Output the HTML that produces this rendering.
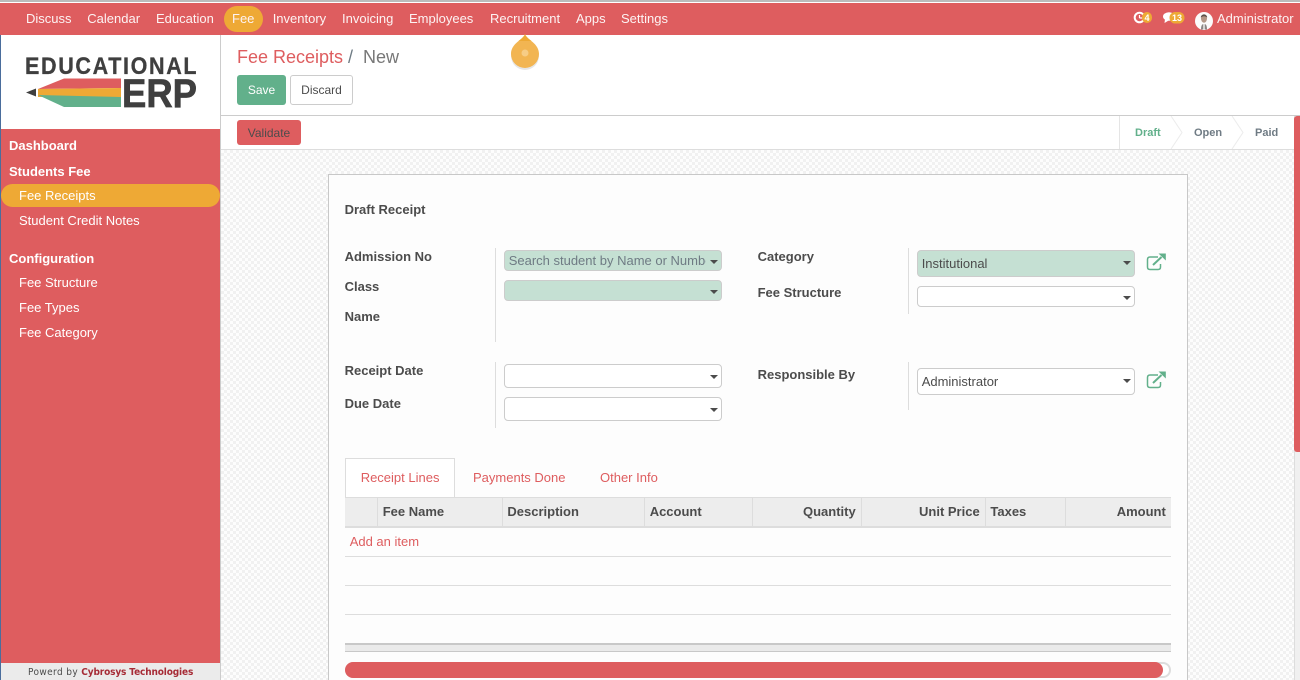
<!DOCTYPE html>
<html><head><meta charset="utf-8"><style>
html,body{margin:0;padding:0;width:1300px;height:680px;overflow:hidden;background:#fff;font-family:"Liberation Sans",sans-serif;font-size:13px;color:#4c4c4c}
div,span,a{position:absolute;white-space:nowrap;box-sizing:border-box}
.n{top:11px;color:#fdf3f3;line-height:15px}
.s{color:#fff;line-height:15px}
.b{font-weight:700;color:#fff}
.l{font-weight:700;color:#4c4c4c;line-height:15px}
.sel{border:1px solid #ccc;border-radius:4px;background:#fff;height:24px;width:218px;line-height:24px;padding-left:4px;color:#4c4c4c}
.g{background:#c5e0d3}
.sel i{position:absolute;right:3px;top:10px;border-left:4px solid transparent;border-right:4px solid transparent;border-top:4px solid #4c4c4c}
.v{width:1px;background:#ddd}
.th{top:498px;height:29px;line-height:28px;font-weight:700;color:#4c4c4c}
.sep{top:498px;height:29px;width:1px;background:#ddd}
.h{left:345px;width:826px;height:1px;background:#ddd}
</style></head><body>
<div style="left:0;top:0;width:1300px;height:3px;background:#fff;border-top:2px solid #bbb"></div>
<div style="left:0;top:3px;width:1300px;height:32px;background:#de5d5f"></div>
<div style="left:224px;top:6px;width:39px;height:26px;border-radius:13px;background:#eea935"></div>
<span class="n" style="left:26px">Discuss</span>
<span class="n" style="left:87.300px">Calendar</span>
<span class="n" style="left:156px">Education</span>
<span class="n" style="left:232px">Fee</span>
<span class="n" style="left:272.700px">Inventory</span>
<span class="n" style="left:342px">Invoicing</span>
<span class="n" style="left:409px">Employees</span>
<span class="n" style="left:490px">Recruitment</span>
<span class="n" style="left:576px">Apps</span>
<span class="n" style="left:621px">Settings</span>

<svg style="position:absolute;left:505px;top:33px" width="40" height="40" viewBox="0 0 40 40"><path d="M20 1C18 7 6 10 6 21a14 14 0 0 0 28 0C34 10 22 7 20 1Z" fill="#e6e6e6" transform="translate(0 2)"/><path d="M20 1C18 7 6 10 6 21a14 14 0 0 0 28 0C34 10 22 7 20 1Z" fill="#f2b552"/><path d="M20 1C19 4 16 6 13.500 8H26.500C24 6 21 4 20 1Z" fill="#eea935"/><circle cx="20" cy="20" r="3.500" fill="#f7cd86"/></svg>

<svg style="position:absolute;left:1132px;top:10px" width="24" height="16" viewBox="0 0 24 16"><circle cx="7.500" cy="7.500" r="4.800" fill="none" stroke="#fff" stroke-width="2"/><path d="M7.500 8h4M7.500 8V5" stroke="#fff" stroke-width="1.200"/><rect x="10" y="2" width="10" height="11" rx="5" fill="#eea935"/><text x="15" y="11" font-size="9" font-weight="700" fill="#fff" text-anchor="middle" font-family="Liberation Sans">4</text></svg>
<svg style="position:absolute;left:1162px;top:10px" width="24" height="16" viewBox="0 0 24 16"><ellipse cx="7" cy="6.500" rx="6" ry="4.300" fill="#fff"/><path d="M3 9l-.5 4 5-3Z" fill="#fff"/><rect x="7.500" y="2" width="15" height="11.500" rx="5.700" fill="#eea935"/><text x="15" y="11" font-size="9" font-weight="700" fill="#fff" text-anchor="middle" font-family="Liberation Sans">13</text></svg>
<svg style="position:absolute;left:1195px;top:11.500px" width="18" height="18" viewBox="0 0 18 18"><circle cx="9" cy="9" r="9" fill="#fbfbfb"/><ellipse cx="9" cy="6.500" rx="3" ry="4.200" fill="#b39786"/><path d="M5.800 5.500C6 1.500 12 1.500 12.200 5.500 10 3.800 8 3.800 5.800 5.500Z" fill="#5a504a"/><path d="M6 17.500c0-4 1-5.500 3-5.500s3 1.500 3 5.500Z" fill="#8a8684"/><path d="M8.300 12h1.400v5.500H8.300Z" fill="#f2f2f2"/></svg>
<span class="n" style="left:1217px">Administrator</span>

<!-- sidebar -->
<div style="left:220px;top:35px;width:1px;height:645px;background:#ccc"></div>
<div style="left:0;top:35px;width:1px;height:645px;background:#4a6d9c"></div>
<svg style="position:absolute;left:20px;top:50px" width="185" height="62" viewBox="20 50 185 62">
<g transform="translate(25 74) scale(.88 1)"><text x="0" y="0" font-family="Liberation Sans" font-weight="700" font-size="24.500" fill="#3f3f3f" stroke="#3f3f3f" stroke-width=".3" textLength="195" lengthAdjust="spacing">EDUCATIONAL</text></g>
<path d="M26 92.500 36 88.500V96.500Z" fill="#3f3f3f"/>
<path d="M38 89 64 78.500H121V88Z" fill="#de5d5f"/>
<path d="M38 89 121 88V97H38Z" fill="#eea935"/>
<path d="M38 95 121 97V107H64Z" fill="#62b08b"/>
<text x="122" y="107" font-family="Liberation Sans" font-weight="700" font-size="40" fill="#3f3f3f" stroke="#3f3f3f" stroke-width=".7" textLength="75" lengthAdjust="spacingAndGlyphs">ERP</text>
</svg>
<div style="left:1px;top:129px;width:219px;height:534px;background:#de5d5f"></div>
<div style="left:1px;top:663px;width:219px;height:17px;background:#ebebeb"></div>
<span style="left:28px;top:666px;font-size:10px;line-height:13px;letter-spacing:.42px;font-family:'DejaVu Sans','Liberation Sans',sans-serif;transform-origin:0 0;transform:scaleX(.9)">Powerd by <b style="color:#a62b36;letter-spacing:-.16px">Cybrosys Technologies</b></span>
<span class="s b" style="left:9px;top:138px">Dashboard</span>
<span class="s b" style="left:9px;top:164px">Students Fee</span>
<div style="left:1px;top:184px;width:219px;height:23px;border-radius:12px;background:#eea935"></div>
<span class="s" style="left:19px;top:188px">Fee Receipts</span>
<span class="s" style="left:19px;top:213px">Student Credit Notes</span>
<span class="s b" style="left:9px;top:251px">Configuration</span>
<span class="s" style="left:19px;top:275px">Fee Structure</span>
<span class="s" style="left:19px;top:300px">Fee Types</span>
<span class="s" style="left:19px;top:325px">Fee Category</span>

<!-- header -->
<span style="left:237px;top:46px;font-size:18px;line-height:22px;color:#de5d5f">Fee Receipts</span>
<span style="left:348px;top:46px;font-size:18px;line-height:22px;color:#6f7b84">/</span>
<span style="left:363px;top:46px;font-size:18px;line-height:22px;color:#777">New</span>
<div style="left:237px;top:75px;width:49px;height:30px;border-radius:3px;background:#62b08b;color:#fff;font-size:12px;line-height:30px;text-align:center">Save</div>
<div style="left:290px;top:75px;width:63px;height:30px;border-radius:3px;border:1px solid #ccc;background:#fff;font-size:12px;line-height:28px;text-align:center;color:#4c4c4c">Discard</div>
<div style="left:221px;top:115px;width:1079px;height:1px;background:#ccc"></div>
<div style="left:221px;top:116px;width:1073px;height:34px;background:#fff;border-bottom:1px solid #ddd"></div>
<div style="left:237px;top:120px;width:64px;height:25px;border-radius:3px;background:#de5d5f;color:#4c4c4c;font-size:12px;line-height:26px;text-align:center">Validate</div>
<div style="left:1119px;top:116px;width:1px;height:33px;background:#e5e5e5"></div>
<svg style="position:absolute;left:1165px;top:116px" width="80" height="33"><path d="M6 0 17 16.500 6 33M67 0 78 16.500 67 33" fill="none" stroke="#ececec"/></svg>
<span style="left:1135px;top:126px;font-size:11px;font-weight:700;line-height:14px;color:#62b08b">Draft</span>
<span style="left:1194px;top:126px;font-size:11px;font-weight:700;line-height:14px;color:#6f7b84">Open</span>
<span style="left:1255px;top:126px;font-size:11px;font-weight:700;line-height:14px;color:#6f7b84">Paid</span>

<!-- content bg -->
<div style="left:221px;top:150px;width:1073px;height:530px;background:repeating-conic-gradient(#f1f1f1 0 25%,#fdfdfd 0 50%) 0 0/6px 6px"></div>
<div style="left:1294px;top:116px;width:6px;height:564px;background:#f0f0f0;border-left:1px solid #ddd"></div>
<div style="left:1294px;top:116px;width:6px;height:336px;background:#de5d5f;border-radius:3px 0 0 3px"></div>

<!-- sheet -->
<div style="left:328px;top:174px;width:860px;height:506px;background:#fdfdfd;border:1px solid #c8c8c8;border-bottom:none"></div>
<span class="l" style="left:344.600px;top:202px">Draft Receipt</span>
<span class="l" style="left:344.600px;top:249px">Admission No</span>
<span class="l" style="left:344.600px;top:279px">Class</span>
<span class="l" style="left:344.600px;top:309px">Name</span>
<span class="l" style="left:344.600px;top:363px">Receipt Date</span>
<span class="l" style="left:344.600px;top:396px">Due Date</span>
<span class="l" style="left:757.600px;top:249px">Category</span>
<span class="l" style="left:757.600px;top:285px">Fee Structure</span>
<span class="l" style="left:757.600px;top:367px">Responsible By</span>
<div class="v" style="left:495px;top:248px;height:94px"></div>
<div class="v" style="left:495px;top:362px;height:66px"></div>
<div class="v" style="left:908px;top:248px;height:66px"></div>
<div class="v" style="left:908px;top:362px;height:48px"></div>

<div class="sel g" style="left:504px;top:250px;height:21px;line-height:20px;color:#6f7b84"><span style="left:3.700px;top:0;width:197px;overflow:hidden">Search student by Name or Number</span><i style="top:9px"></i></div>
<div class="sel g" style="left:504px;top:280px;height:21px"><i style="top:9px"></i></div>
<div class="sel g" style="left:917px;top:250px;height:27px;line-height:26px;padding-left:3.700px">Institutional<i style="top:10px"></i></div>
<div class="sel" style="left:917px;top:286px;height:21px;line-height:20px"><i style="top:9px"></i></div>
<div class="sel" style="left:504px;top:364px"><i style="top:10px"></i></div>
<div class="sel" style="left:504px;top:397px"><i style="top:10px"></i></div>
<div class="sel" style="left:917px;top:368px;height:27px;line-height:26px;padding-left:3.700px">Administrator<i style="top:10px"></i></div>
<svg style="position:absolute;left:1146px;top:253px" width="20" height="18" viewBox="0 0 20 18"><path d="M12 4H4Q1.500 4 1.500 6.500V14Q1.500 16.500 4 16.500H12Q14.500 16.500 14.500 14V11" fill="none" stroke="#62b08b" stroke-width="1.500"/><path d="M7 12 15.500 4" stroke="#62b08b" stroke-width="2"/><path d="M12.500 .5H19.800V7.500Z" fill="#62b08b"/></svg>
<svg style="position:absolute;left:1146px;top:371px" width="20" height="18" viewBox="0 0 20 18"><path d="M12 4H4Q1.500 4 1.500 6.500V14Q1.500 16.500 4 16.500H12Q14.500 16.500 14.500 14V11" fill="none" stroke="#62b08b" stroke-width="1.500"/><path d="M7 12 15.500 4" stroke="#62b08b" stroke-width="2"/><path d="M12.500 .5H19.800V7.500Z" fill="#62b08b"/></svg>

<!-- tabs -->
<div style="left:345px;top:458px;width:110px;height:40px;background:#fff;border:1px solid #ddd;border-bottom:none"></div>
<span style="left:360.700px;top:470px;line-height:15px;color:#de5d5f">Receipt Lines</span>
<span style="left:473px;top:470px;line-height:15px;color:#de5d5f">Payments Done</span>
<span style="left:600px;top:470px;line-height:15px;color:#de5d5f">Other Info</span>

<!-- table -->
<div style="left:345px;top:497px;width:826px;height:31px;background:#ededed;border-top:1px solid #ddd;border-bottom:2px solid #ddd"></div>
<div style="left:345px;top:458px;width:1px;height:40px;background:#ddd"></div>
<div class="sep" style="left:377px"></div>
<div class="sep" style="left:502px"></div>
<div class="sep" style="left:644px"></div>
<div class="sep" style="left:752px"></div>
<div class="sep" style="left:861px"></div>
<div class="sep" style="left:985px"></div>
<div class="sep" style="left:1065px"></div>
<span class="th" style="left:382.700px">Fee Name</span>
<span class="th" style="left:507.400px">Description</span>
<span class="th" style="left:649.700px">Account</span>
<span class="th" style="left:803px">Quantity</span>
<span class="th" style="left:919px">Unit Price</span>
<span class="th" style="left:990.400px">Taxes</span>
<span class="th" style="left:1116.700px">Amount</span>
<span style="left:349.700px;top:534px;line-height:15px;color:#de5d5f">Add an item</span>
<div class="h" style="top:556px"></div>
<div class="h" style="top:585px"></div>
<div class="h" style="top:614px"></div>
<div style="left:345px;top:643px;width:826px;height:9px;background:#eaeaea;border-top:2px solid #c8c8c8;border-bottom:1px solid #c8c8c8"></div>
<div style="left:345px;top:662px;width:826px;height:16px;border-radius:8px;background:#fff;border:2px solid #ddd"></div>
<div style="left:345px;top:662px;width:818px;height:16px;border-radius:8px;background:#de5d5f"></div>
</body></html>
